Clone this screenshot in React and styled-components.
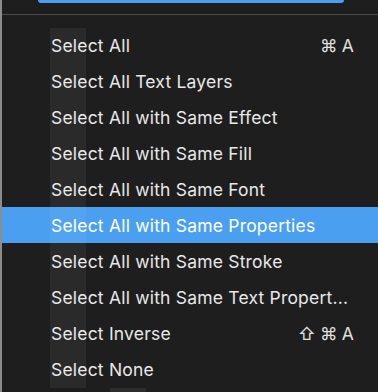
import React from 'react';
import styled, { createGlobalStyle } from 'styled-components';

const Global = createGlobalStyle`
	html, body {
		margin: 0;
		padding: 0;
		background: #1e1e1e;
	}
	body {
		font-family: Inter, "Noto Sans", sans-serif;
		-webkit-font-smoothing: antialiased;
	}
`;

const Frame = styled.div`
	position: relative;
	width: 378px;
	height: 392px;
	box-sizing: border-box;
	border-left: 2px solid #8d8d8d;
	background: #1e1e1e;
	overflow: hidden;
`;

const Field = styled.div`
	margin: 0 34px 0 36px;
	height: 3px;
	background: #4a9ff0;
	border-radius: 0 0 4px 4px;
`;

const Divider = styled.div`
	margin-top: 11px;
	height: 1px;
	background: #4a4a4a;
`;

const List = styled.ul`
	list-style: none;
	margin: 0;
	padding: 12px 0 0;
`;

const Item = styled.li`
	display: flex;
	align-items: center;
	justify-content: space-between;
	height: 36px;
	padding: 0 24px 0 49px;
	font-size: 17.5px;
	letter-spacing: 0.2px;
	color: ${p => (p.active ? '#fff' : '#e8e8e8')};
	background: ${p => (p.active ? '#4a9ff0' : 'transparent')};
	white-space: nowrap;
`;

const Label = styled.span`
	min-width: 0;
`;

const Keys = styled.span`
	display: flex;
	gap: 4px;
	margin-left: 12px;
	color: #e0e0e0;
`;

const Stripe = styled.div`
	position: absolute;
	left: 48px;
	top: 28px;
	width: 36px;
	height: 360px;
	background: rgba(255, 255, 255, 0.055);
	pointer-events: none;
`;

const Stub = styled.div`
	position: absolute;
	left: 108px;
	top: 388px;
	width: 36px;
	height: 4px;
	background: rgba(255, 255, 255, 0.07);
`;

const items = [
	{ label: 'Select All', keys: ['⌘', 'A'] },
	{ label: 'Select All Text Layers' },
	{ label: 'Select All with Same Effect' },
	{ label: 'Select All with Same Fill' },
	{ label: 'Select All with Same Font' },
	{ label: 'Select All with Same Properties', active: true },
	{ label: 'Select All with Same Stroke' },
	{ label: 'Select All with Same Text Propert...' },
	{ label: 'Select Inverse', keys: ['⇧', '⌘', 'A'] },
	{ label: 'Select None' },
];

function App() {
	return (
		<Frame>
			<Global />
			<Field />
			<Divider />
			<List>
				{items.map(item => (
					<Item key={item.label} active={item.active}>
						<Label>{item.label}</Label>
						{item.keys && (
							<Keys>
								{item.keys.map(k => <span key={k}>{k}</span>)}
							</Keys>
						)}
					</Item>
				))}
			</List>
			<Stripe />
			<Stub />
		</Frame>
	);
}

export default App;
